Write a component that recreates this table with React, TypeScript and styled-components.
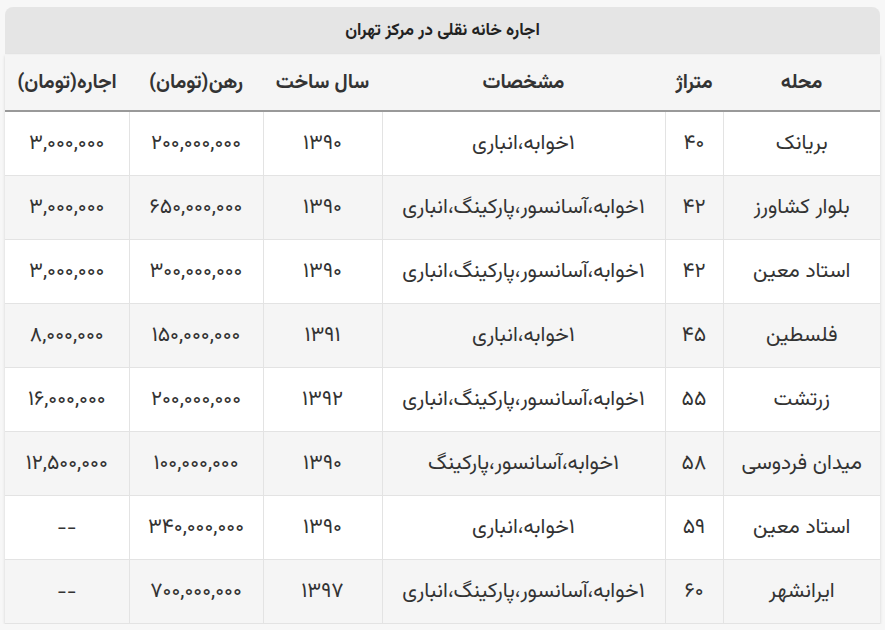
import React from "react";
import styled, { createGlobalStyle } from "styled-components";

const GlobalStyle = createGlobalStyle`
  html, body {
    margin: 0;
    padding: 0;
    background: #f7f7f7;
  }
  body {
    font-family: "Vazirmatn", "DejaVu Sans", "Noto Sans", sans-serif;
    color: #333;
  }
`;

const Page = styled.div`
  padding: 7px 5px 0 5px;
  direction: rtl;
`;

const Caption = styled.div`
  height: 47px;
  background: #e5e5e5;
  border-radius: 8px 8px 0 0;
  display: flex;
  align-items: center;
  justify-content: center;
  font-size: 17px;
  font-weight: bold;
  color: #222;
  margin-bottom: 1px;
`;

const Table = styled.table`
  width: 100%;
  border-collapse: collapse;
  background: #fff;
  box-shadow: 0 1px 3px rgba(0, 0, 0, 0.15);
  table-layout: fixed;
`;

const HeadCell = styled.th<{ w: number }>`
  width: ${(p) => p.w}px;
  height: 55px;
  background: #f5f5f5;
  border-bottom: 2px solid #999;
  font-size: 20px;
  font-weight: bold;
  color: #333;
  text-align: center;
  padding: 0;
`;

const Row = styled.tr<{ alt: boolean }>`
  background: ${(p) => (p.alt ? "#f5f5f5" : "#fff")};
`;

const Cell = styled.td`
  height: 63px;
  border: 1px solid #e3e3e3;
  border-top: none;
  font-size: 21px;
  text-align: center;
  padding: 0;
  &:first-child {
    border-right: none;
  }
  &:last-child {
    border-left: none;
  }
`;

const columns = [
  { title: "محله", w: 157 },
  { title: "متراژ", w: 58 },
  { title: "مشخصات", w: 283 },
  { title: "سال ساخت", w: 119 },
  { title: "رهن(تومان)", w: 134 },
  { title: "اجاره(تومان)", w: 124 },
];

const full = "۱خوابه،آسانسور،پارکینگ،انباری";
const short = "۱خوابه،انباری";

const rows = [
  ["بریانک", "۴۰", short, "۱۳۹۰", "۲۰۰,۰۰۰,۰۰۰", "۳,۰۰۰,۰۰۰"],
  ["بلوار کشاورز", "۴۲", full, "۱۳۹۰", "۶۵۰,۰۰۰,۰۰۰", "۳,۰۰۰,۰۰۰"],
  ["استاد معین", "۴۲", full, "۱۳۹۰", "۳۰۰,۰۰۰,۰۰۰", "۳,۰۰۰,۰۰۰"],
  ["فلسطین", "۴۵", short, "۱۳۹۱", "۱۵۰,۰۰۰,۰۰۰", "۸,۰۰۰,۰۰۰"],
  ["زرتشت", "۵۵", full, "۱۳۹۲", "۲۰۰,۰۰۰,۰۰۰", "۱۶,۰۰۰,۰۰۰"],
  ["میدان فردوسی", "۵۸", "۱خوابه،آسانسور،پارکینگ", "۱۳۹۰", "۱۰۰,۰۰۰,۰۰۰", "۱۲,۵۰۰,۰۰۰"],
  ["استاد معین", "۵۹", short, "۱۳۹۰", "۳۴۰,۰۰۰,۰۰۰", "--"],
  ["ایرانشهر", "۶۰", full, "۱۳۹۷", "۷۰۰,۰۰۰,۰۰۰", "--"],
];

export default function App() {
  return (
    <>
      <GlobalStyle />
      <Page>
        <Caption>اجاره خانه نقلی در مرکز تهران</Caption>
        <Table>
          <thead>
            <tr>
              {columns.map((c) => (
                <HeadCell key={c.title} w={c.w}>
                  {c.title}
                </HeadCell>
              ))}
            </tr>
          </thead>
          <tbody>
            {rows.map((r, i) => (
              <Row key={i} alt={i % 2 === 1}>
                {r.map((v, j) => (
                  <Cell key={j}>{v}</Cell>
                ))}
              </Row>
            ))}
          </tbody>
        </Table>
      </Page>
    </>
  );
}
